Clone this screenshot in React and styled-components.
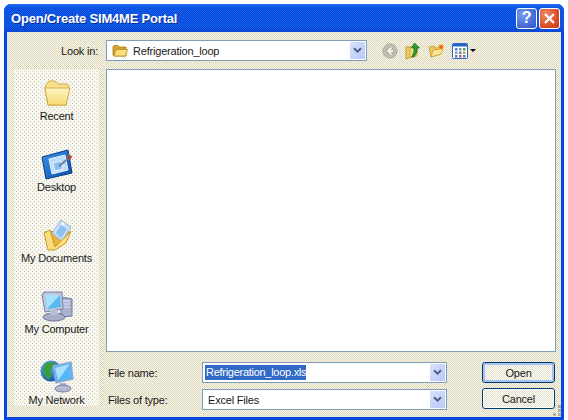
import styled, { createGlobalStyle } from "styled-components";

const GlobalStyle = createGlobalStyle`
  html, body {
    margin: 0;
    padding: 0;
    background: #fff;
  }
  body {
    width: 568px;
    height: 420px;
    overflow: hidden;
    font-family: "Liberation Sans", Arial, sans-serif;
    font-size: 11px;
    letter-spacing: -0.2px;
    color: #1a1a1a;
  }
`;

const FolderIcon = ({ size = 16 }) => (
  <svg width={size} height={size} viewBox="0 0 16 16">
    <path d="M1 4 L2 2.5 H6 L7 4 H14 V13 H2 L1 12 Z" fill="#d8a630" stroke="#a87a10" strokeWidth="0.8" />
    <path d="M2 13 L4 6.5 H15.5 L13.5 13 Z" fill="#fbe07c" stroke="#b58a1c" strokeWidth="0.8" />
  </svg>
);

const RecentIcon = () => (
  <svg width="32" height="32" viewBox="0 0 32 32">
    <defs>
      <linearGradient id="rec" x1="0" y1="0" x2="0" y2="1">
        <stop offset="0" stopColor="#fdf6c4" />
        <stop offset="1" stopColor="#f8d873" />
      </linearGradient>
    </defs>
    <path d="M5 8 L8 4 H14 L17 7 H26 L28 9 L25 28 H7 L4 12 Z" fill="#f8e08e" stroke="#d0ac48" />
    <path d="M4 11 H29 L25 28 H7 Z" fill="url(#rec)" stroke="#d0ac48" />
  </svg>
);

const DesktopIcon = () => (
  <svg width="32" height="32" viewBox="0 0 32 32">
    <defs>
      <linearGradient id="dsk" x1="0" y1="0" x2="1" y2="1">
        <stop offset="0" stopColor="#3a9ae8" />
        <stop offset="1" stopColor="#0c47a8" />
      </linearGradient>
    </defs>
    <path d="M1 9 L27 2 L31 25 L5 31 Z" fill="url(#dsk)" stroke="#0a3a88" />
    <path d="M8 11 L24 7 L27 22 L11 26 Z" fill="#bcdcfb" stroke="#e8f3ff" />
    <path d="M12 15 L20 13 L22 21 L14 23 Z" fill="#8dbdf0" stroke="#fff" strokeWidth="0.8" />
    <path d="M18 18 L28 10" stroke="#6c7c9c" strokeWidth="1.8" />
    <rect x="26.5" y="7" width="4" height="4" fill="#b24a2c" transform="rotate(20 28 9)" />
  </svg>
);

const DocumentsIcon = () => (
  <svg width="32" height="32" viewBox="0 0 32 32">
    <path d="M4 13 L7 28 L14 31 L29 13 L20 12 Z" fill="#e8b43c" stroke="#b88a20" />
    <path d="M11 14 L20 1 L30 8 L21 22 Z" fill="#c6def8" stroke="#9ab8dc" />
    <path d="M15 14 L20 6 L26 10 L20 19 Z" fill="#8fc0f0" />
    <circle cx="22" cy="5" r="1.5" fill="#fff" />
    <path d="M3 14 L9 11 L14 28 L30 12 L25 24 L14 31 H7 Z" fill="#fbdd80" stroke="#c79a2c" />
  </svg>
);

const ComputerIcon = () => (
  <svg width="34" height="32" viewBox="0 0 34 32">
    <path d="M21 7 L32 9 V26 L21 27 Z" fill="#aab2d0" stroke="#6e76a0" />
    <path d="M23 11 H30 M23 14 H30 M23 17 H30" stroke="#e4e8f6" strokeWidth="1.2" />
    <path d="M2 5 L4 2 H22 L23 19 L5 22 Z" fill="#c2c8dc" stroke="#7880a8" />
    <path d="M5 5 H20 L21 17 L7 19 Z" fill="#56b8f2" />
    <path d="M5 5 H20 L8 18 L7 19 Z" fill="#a6e0fb" />
    <ellipse cx="14" cy="27" rx="11" ry="4" fill="#a8aec8" stroke="#6e76a0" />
    <rect x="10" y="20" width="8" height="5" fill="#b8bed4" />
  </svg>
);

const NetworkIcon = () => (
  <svg width="34" height="34" viewBox="0 0 34 34">
    <defs>
      <radialGradient id="glb" cx="0.35" cy="0.3" r="0.8">
        <stop offset="0" stopColor="#5cc0f0" />
        <stop offset="1" stopColor="#0c4aa0" />
      </radialGradient>
    </defs>
    <circle cx="11" cy="12" r="10.5" fill="url(#glb)" />
    <path d="M6 4 L14 3 L15 8 L10 11 L12 16 L8 21 L4 15 L3 9 Z" fill="#3c9c3c" />
    <path d="M13 7 L31 3 L33 20 L16 24 Z" fill="#54b8f4" stroke="#9aa8cc" strokeWidth="1.4" />
    <path d="M15 9 L30 5 L18 21 Z" fill="#a8e0fb" />
    <path d="M20 24 H26 L27 27 H20 Z" fill="#b0b6cc" />
    <ellipse cx="23" cy="29.5" rx="8" ry="3.5" fill="#b4bad0" stroke="#7880a4" />
  </svg>
);

const BackIcon = () => (
  <svg width="16" height="16" viewBox="0 0 16 16">
    <circle cx="8" cy="8" r="7" fill="#c4c2b6" stroke="#a6a498" />
    <circle cx="8" cy="8" r="4.5" fill="#b2b0a4" />
    <path d="M9.5 4.5 L6 8 L9.5 11.5 M6 8 H11" fill="none" stroke="#f2f1ea" strokeWidth="1.8" />
  </svg>
);

const UpIcon = () => (
  <svg width="16" height="18" viewBox="0 0 16 18">
    <path d="M1 5 H7 V15 L1 17 Z" fill="#f0cc60" stroke="#b88f24" strokeWidth="0.8" />
    <path d="M5 5 H12 V14 L5 15 Z" fill="#f7dd85" stroke="#c29a30" strokeWidth="0.8" />
    <path d="M9.5 1 L14.5 6 H12 V10 L9 15 H7 L9 9.5 V6 H6.5 Z" fill="#2f9c2f" stroke="#11661a" strokeWidth="0.7" />
  </svg>
);

const NewFolderIcon = () => (
  <svg width="17" height="16" viewBox="0 0 17 16">
    <path d="M1 4 L6 3 L7 5 L13 4 V11 L3 14 Z" fill="#eec659" stroke="#c29a30" strokeWidth="0.8" />
    <path d="M3 14 L5 7 L15 6 L13 11 Z" fill="#fae59a" stroke="#c9a33c" strokeWidth="0.8" />
    <circle cx="13" cy="4" r="2.6" fill="#ea6a2c" stroke="#fbd060" />
  </svg>
);

const ViewsIcon = () => (
  <svg width="16" height="16" viewBox="0 0 16 16">
    <rect x="0.5" y="0.5" width="15" height="15" rx="1" fill="#fff" stroke="#2a66c4" />
    <rect x="1" y="1" width="14" height="2.5" fill="#2a66c4" />
    <rect x="3" y="5" width="2.5" height="2.5" fill="#4f7fc8" />
    <rect x="7" y="5" width="2.5" height="2.5" fill="#8a93a8" />
    <rect x="11" y="5" width="2.5" height="2.5" fill="#4f9c58" />
    <rect x="3" y="8.5" width="2.5" height="2.5" fill="#8a93a8" />
    <rect x="7" y="8.5" width="2.5" height="2.5" fill="#4f7fc8" />
    <rect x="11" y="8.5" width="2.5" height="2.5" fill="#d0a030" />
    <rect x="3" y="12" width="2.5" height="2.5" fill="#4f7fc8" />
    <rect x="7" y="12" width="2.5" height="2.5" fill="#c85a3a" />
    <rect x="11" y="12" width="2.5" height="2.5" fill="#4f7fc8" />
  </svg>
);

const Chevron = () => (
  <svg width="9" height="7" viewBox="0 0 9 7">
    <path d="M1 1.2 L4.5 4.7 L8 1.2" fill="none" stroke="#4d6185" strokeWidth="2" />
  </svg>
);

const CloseCross = () => (
  <svg width="13" height="13" viewBox="0 0 13 13">
    <path d="M2 2 L11 11 M11 2 L2 11" fill="none" stroke="#fff" strokeWidth="2.2" />
  </svg>
);

const GripDots = () => (
  <svg width="8" height="12" viewBox="0 0 8 12">
    <g fill="#b4b09c">
      <rect x="5" y="0" width="3" height="3" />
      <rect x="5" y="4" width="3" height="3" />
      <rect x="0" y="8" width="3" height="3" />
      <rect x="5" y="8" width="3" height="3" />
    </g>
  </svg>
);

const places = [
  { label: "Recent", icon: <RecentIcon /> },
  { label: "Desktop", icon: <DesktopIcon /> },
  { label: "My Documents", icon: <DocumentsIcon /> },
  { label: "My Computer", icon: <ComputerIcon /> },
  { label: "My Network", icon: <NetworkIcon /> },
];

export default function App() {
  return (
    <>
      <GlobalStyle />
      <Window>
        <TitleBar>
          <Title>Open/Create SIM4ME Portal</Title>
          <CaptionButtons>
            <CaptionButton>?</CaptionButton>
            <CaptionButton $close>
              <CloseCross />
            </CaptionButton>
          </CaptionButtons>
        </TitleBar>
        <Client>
          <LookInLabel>Look in:</LookInLabel>
          <Toolbar>
            <ComboBox $width={261}>
              <ComboText>
                <FolderIcon />
                <span>Refrigeration_loop</span>
              </ComboText>
              <DropButton>
                <Chevron />
              </DropButton>
            </ComboBox>
            <ToolIcons>
              <BackIcon />
              <UpIcon />
              <NewFolderIcon />
              <ViewsGroup>
                <ViewsIcon />
                <SmallArrow />
              </ViewsGroup>
            </ToolIcons>
          </Toolbar>
          <Sidebar>
            {places.map((place) => (
              <Place key={place.label}>
                {place.icon}
                <span>{place.label}</span>
              </Place>
            ))}
          </Sidebar>
          <MainColumn>
            <FileList />
            <FormGrid>
              <FieldLabel>File name:</FieldLabel>
              <ComboBox>
                <ComboText $tight>
                  <Selected>Refrigeration_loop.xls</Selected>
                </ComboText>
                <DropButton>
                  <Chevron />
                </DropButton>
              </ComboBox>
              <DialogButton $primary>Open</DialogButton>
              <FieldLabel>Files of type:</FieldLabel>
              <ComboBox>
                <ComboText>
                  <span>Excel Files</span>
                </ComboText>
                <DropButton>
                  <Chevron />
                </DropButton>
              </ComboBox>
              <DialogButton>Cancel</DialogButton>
            </FormGrid>
          </MainColumn>
          <Grip>
            <GripDots />
          </Grip>
        </Client>
      </Window>
    </>
  );
}

const Window = styled.div`
  margin: 4px 0 0 4px;
  width: 560px;
  height: 416px;
  display: flex;
  flex-direction: column;
  border-radius: 7px 7px 0 0;
  overflow: hidden;
  background: #0a46e4;
`;

const TitleBar = styled.div`
  height: 28px;
  flex: none;
  display: flex;
  align-items: center;
  justify-content: space-between;
  padding: 0 4px 0 7px;
  background-image: repeating-conic-gradient(rgba(0, 30, 190, 0.28) 0 25%, rgba(50, 120, 255, 0.22) 0 50%),
    linear-gradient(#2a80f0 0, #0c5ae6 3px, #0c58e0 22px, #0a48d4 100%);
  background-size: 2px 2px, auto;
`;

const Title = styled.div`
  color: #fff;
  font-weight: bold;
  font-size: 13px;
  letter-spacing: -0.2px;
  text-shadow: 1px 1px 0 #0a2f9c;
`;

const CaptionButtons = styled.div`
  display: flex;
  gap: 2px;
`;

const CaptionButton = styled.div`
  width: 21px;
  height: 21px;
  box-sizing: border-box;
  border: 1px solid #fff;
  border-radius: 3px;
  display: flex;
  align-items: center;
  justify-content: center;
  color: #fff;
  font-weight: bold;
  font-size: 16px;
  background: ${(p) =>
    p.$close
      ? "radial-gradient(circle at 30% 30%, #ec8a68, #d8481e 70%, #c23a14)"
      : "radial-gradient(circle at 30% 30%, #7a9cf0, #3f66d4 70%, #2f54c8)"};
`;

const Client = styled.div`
  position: relative;
  flex: 1;
  margin: 0 3px 3px;
  box-sizing: border-box;
  padding: 8px 5px 7px 7px;
  display: grid;
  grid-template-columns: 85px 1fr;
  grid-template-rows: 21px 1fr;
  column-gap: 7px;
  row-gap: 8px;
  background-color: #ece9d8;
  background-image: repeating-conic-gradient(#dbd5b6 0 25%, #fbfaf2 0 50%);
  background-size: 2px 2px;
`;

const LookInLabel = styled.div`
  display: flex;
  align-items: center;
  justify-content: flex-end;
  padding-right: 1px;
`;

const Toolbar = styled.div`
  display: flex;
  align-items: center;
  gap: 15px;
`;

const ComboBox = styled.div`
  box-sizing: border-box;
  height: 21px;
  width: ${(p) => (p.$width ? `${p.$width}px` : "auto")};
  display: flex;
  align-items: center;
  justify-content: space-between;
  padding: 1px;
  background: #fff;
  border: 1px solid #7f9db9;
`;

const ComboText = styled.div`
  display: flex;
  align-items: center;
  gap: 5px;
  padding-left: ${(p) => (p.$tight ? "1px" : "4px")};
`;

const Selected = styled.span`
  background: #316ac5;
  color: #fff;
  padding: 1px 0 2px 1px;
  letter-spacing: -0.28px;
`;

const DropButton = styled.div`
  width: 15px;
  height: 17px;
  display: flex;
  align-items: center;
  justify-content: center;
  background: linear-gradient(135deg, #d8e2fc, #b6c8fa);
`;

const ToolIcons = styled.div`
  display: flex;
  align-items: center;
  gap: 7px;
`;

const ViewsGroup = styled.div`
  display: flex;
  align-items: center;
  gap: 2px;
`;

const SmallArrow = styled.div`
  width: 0;
  height: 0;
  border-left: 3px solid transparent;
  border-right: 3px solid transparent;
  border-top: 3px solid #000;
`;

const Sidebar = styled.div`
  margin-bottom: 4px;
  display: flex;
  flex-direction: column;
  justify-content: space-between;
  background-color: #f8f7ef;
  background-image: conic-gradient(at 1px 1px, transparent 75%, #d0ccba 0),
    conic-gradient(at 1px 1px, transparent 75%, #d0ccba 0);
  background-size: 4px 4px;
  background-position: 0 0, 2px 2px;
`;

const Place = styled.div`
  height: 53px;
  display: flex;
  flex-direction: column;
  align-items: center;
  justify-content: flex-end;
  gap: 1px;
  box-sizing: border-box;

  svg {
    flex: none;
  }
`;

const MainColumn = styled.div`
  display: flex;
  flex-direction: column;
  gap: 10px;
  min-height: 0;
`;

const FileList = styled.div`
  flex: 1;
  background: #fff;
  border: 1px solid #7f9db9;
`;

const FormGrid = styled.div`
  display: grid;
  grid-template-columns: 96px 245px 1fr;
  grid-template-rows: 21px 21px;
  row-gap: 6px;
`;

const FieldLabel = styled.div`
  display: flex;
  align-items: center;
  padding-left: 2px;
`;

const DialogButton = styled.div`
  margin: ${(p) => (p.$primary ? "0 1px 0 35px" : "-1px 1px 0 35px")};
  box-sizing: border-box;
  height: 21px;
  display: flex;
  align-items: center;
  justify-content: center;
  border: 1px solid #003c74;
  border-radius: 3px;
  background-color: #f2f1e8;
  background-image: repeating-conic-gradient(#e2dfcc 0 25%, #fdfdf8 0 50%);
  background-size: 2px 2px;
  box-shadow: ${(p) => (p.$primary ? "inset 0 0 0 2px #a6c2ee" : "inset 0 0 0 1px #fff")};
`;

const Grip = styled.div`
  position: absolute;
  right: 0;
  bottom: 0;
  line-height: 0;
`;
